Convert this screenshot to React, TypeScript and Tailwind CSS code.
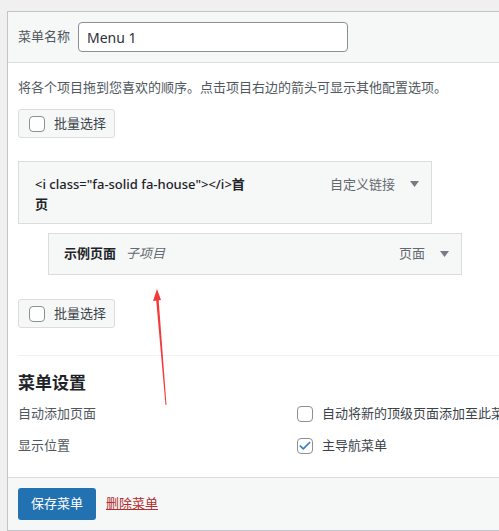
import { Check } from 'lucide-react'

const font = { fontFamily: '"Noto Sans", "Noto Sans CJK SC", sans-serif' }

function Box({ checked = false }: { checked?: boolean }) {
  return (
    <span className="flex h-4 w-4 shrink-0 items-center justify-center rounded-[4px] border border-[#8c8f94] bg-white">
      {checked && <Check className="h-3.5 w-3.5 text-[#3582c4]" strokeWidth={3} />}
    </span>
  )
}

function Caret() {
  return (
    <svg width="9" height="6" viewBox="0 0 9 6" aria-hidden="true">
      <path d="M0 0h9L4.5 6z" fill="#787c82" />
    </svg>
  )
}

function BulkButton() {
  return (
    <button className="flex h-[29px] w-[97px] items-center gap-[9px] rounded-[3px] border border-[#dcdcde] bg-[#f6f7f7] pl-[10px] text-[13px] text-[#3c434a]">
      <Box />
      <span>批量选择</span>
    </button>
  )
}

export default function App() {
  return (
    <div className="relative h-[531px] w-[499px] overflow-hidden bg-[#f0f0f1] pt-[11px] pl-[7px]" style={font}>
      <div className="w-[620px] border border-[#c3c4c7] bg-white">
        {/* header */}
        <div className="flex items-center gap-[8px] border-b border-[#dcdcde] bg-[#f6f7f7] px-[10px] py-[10px]">
          <span className="text-[13px] text-[#50575e]">菜单名称</span>
          <div className="flex h-[30px] w-[270px] items-center rounded-[4px] border border-[#8c8f94] bg-white px-[8px] text-[14px] text-[#2c3338]">
            Menu 1
          </div>
        </div>

        {/* body */}
        <div className="px-[10px] pt-[15px]">
          <p className="text-[13px] leading-[19px] text-[#50575e]">将各个项目拖到您喜欢的顺序。点击项目右边的箭头可显示其他配置选项。</p>
          <div className="mt-[12px]">
            <BulkButton />
          </div>

          <div className="mt-[23px] flex w-[414px] items-start border border-[#dcdcde] bg-[#f6f7f7] pt-[12px] pb-[9px] pl-[16px] pr-[12px]">
            <span className="w-[215px] text-[13px] leading-[20px] font-medium text-[#1d2327]">
              &lt;i class="fa-solid fa-house"&gt;&lt;/i&gt;<span className="font-bold">首页</span>
            </span>
            <span className="ml-auto text-[13px] leading-[20px] text-[#646970]">自定义链接</span>
            <span className="ml-[15px] flex h-[20px] items-center">
              <Caret />
            </span>
          </div>

          <div className="mt-[9px] ml-[30px] flex h-[42px] w-[414px] items-center border border-[#dcdcde] bg-[#f6f7f7] pl-[15px] pr-[12px]">
            <span className="text-[13px] font-bold text-[#1d2327]">示例页面</span>
            <span className="ml-[10px] text-[13px] italic text-[#646970]">子项目</span>
            <span className="ml-auto text-[13px] text-[#646970]">页面</span>
            <span className="ml-[15px] flex items-center">
              <Caret />
            </span>
          </div>

          <div className="mt-[24px]">
            <BulkButton />
          </div>

          <div className="mt-[27px] border-t border-[#f0f0f1]" />

          <h3 className="mt-[15px] text-[17px] leading-[24px] font-semibold text-[#1d2327]">菜单设置</h3>

          <div className="mt-[3px] grid grid-cols-[279px_1fr] text-[13px] text-[#50575e]">
            <div className="flex h-[32px] items-center">自动添加页面</div>
            <div className="flex h-[32px] items-center gap-[9px] whitespace-nowrap text-[#3c434a]">
              <Box />
              <span>自动将新的顶级页面添加至此菜单</span>
            </div>
            <div className="flex h-[32px] items-center">显示位置</div>
            <div className="flex h-[32px] items-center gap-[9px] text-[#3c434a]">
              <Box checked />
              <span>主导航菜单</span>
            </div>
          </div>
        </div>

        {/* footer */}
        <div className="mt-[15px] flex items-center gap-[10px] border-t border-[#dcdcde] bg-[#f6f7f7] px-[10px] pt-[10px] pb-[10px]">
          <button className="h-[32px] rounded-[3px] bg-[#2271b1] px-[13px] text-[13px] text-white">保存菜单</button>
          <a className="text-[13px] text-[#b32d2e] underline">删除菜单</a>
        </div>
      </div>

      {/* annotation arrow */}
      <svg className="pointer-events-none absolute top-0 left-0" width="499" height="531" aria-hidden="true">
        <polygon points="156,298 158.5,298 166.5,405 165.5,405" fill="#f23a3a" />
        <polygon points="157,289 153,301 161,300" fill="#f23a3a" />
      </svg>
    </div>
  )
}
